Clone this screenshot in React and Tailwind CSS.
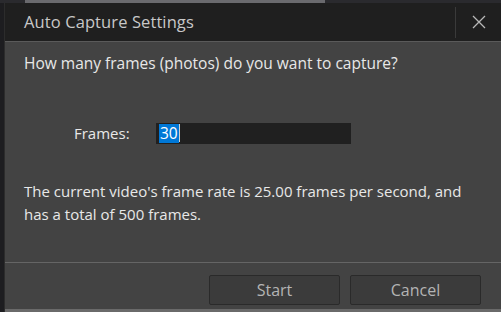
import React from "react";

export default function App() {
    return (
        <div className="w-[501px] h-[312px] bg-[#1d1d20] flex flex-col overflow-hidden" style={{fontFamily: '"Open Sans", "Noto Sans", sans-serif'}}>
            <div className="h-[3px] flex">
                <div className="w-[25px] bg-[#2a2a2e]"></div>
                <div className="w-[300px] bg-[#6a6a6e]"></div>
                <div className="flex-1 bg-[#2a2a2e]"></div>
            </div>
            <div className="flex-1 flex flex-col ml-[4px] border-l border-[#2c2c2c]">
                {/* title bar */}
                <div className="h-[38px] bg-[#1f1f1f] flex items-center">
                    <div className="flex-1 pl-[19px] text-[16.5px] text-[#c8c8c8] tracking-[0.1px]">Auto Capture Settings</div>
                    <div className="w-px h-[31px] bg-[#3a3a3a] mr-[15px]"></div>
                    <svg width="16" height="16" viewBox="0 0 16 16" className="mr-[14px]">
                        <path d="M2 2 L14 14 M14 2 L2 14" stroke="#b8b8b8" strokeWidth="1.3" />
                    </svg>
                </div>
                <div className="h-px bg-[#5a5a5a]"></div>
                {/* body */}
                <div className="h-[220px] bg-[#434343] pl-[19px] pt-[10px] text-[#e8e8e8]">
                    <p className="text-[15.5px] leading-[22px]">How many frames (photos) do you want to capture?</p>
                    <div className="flex items-center mt-[48px]">
                        <label className="w-[132px] pl-[50px] text-[15px]">Frames:</label>
                        <div className="w-[195px] h-[21px] bg-[#202020] flex items-center pl-[3px]">
                            <span className="bg-[#0078d7] text-white text-[15.5px] leading-[19px] px-px">30</span>
                            <span className="w-px h-[18px] bg-[#d0d0d0]"></span>
                        </div>
                    </div>
                    <p className="text-[15px] leading-[23px] mt-[35px] w-[450px]">
                        The current video's frame rate is 25.00 frames per second, and has a total of 500 frames.
                    </p>
                </div>
                <div className="h-px bg-[#656565]"></div>
                {/* footer */}
                <div className="flex-1 bg-[#434343] flex justify-end items-start pt-[12px] pr-[20px] gap-[10px]">
                    <button className="w-[131px] h-[30px] bg-[#3b3b3b] border border-[#2a2a2a] rounded-[2px] text-[#b4b4b4] text-[16px]">Start</button>
                    <button className="w-[131px] h-[30px] bg-[#3b3b3b] border border-[#2a2a2a] rounded-[2px] text-[#b4b4b4] text-[16px]">Cancel</button>
                </div>
                <div className="h-[3px] bg-[#6a6a6a]"></div>
            </div>
        </div>
    );
}
